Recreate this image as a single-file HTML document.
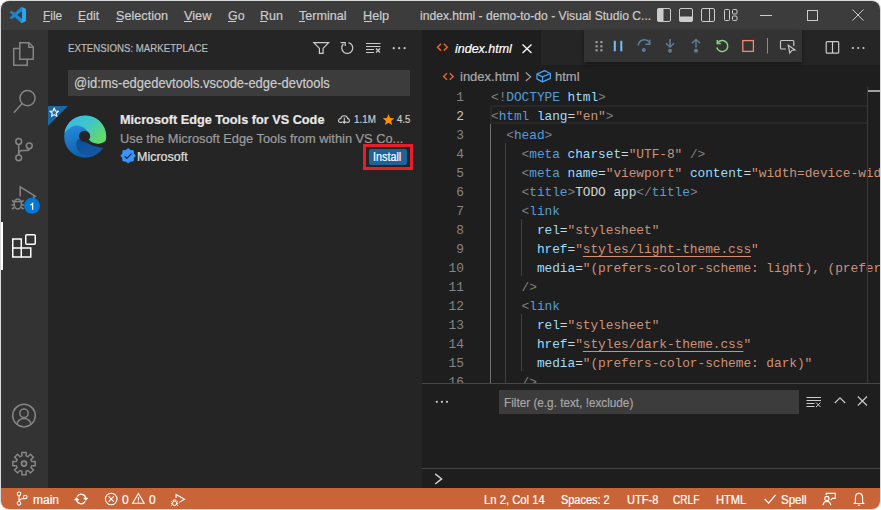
<!DOCTYPE html>
<html><head><meta charset="utf-8">
<style>
*{margin:0;padding:0;box-sizing:border-box}
html,body{width:881px;height:510px;overflow:hidden;background:#ffffff}
body{position:relative;font-family:"Liberation Sans",sans-serif;color:#ccc}
.abs{position:absolute}
#win{position:absolute;left:1px;top:1px;width:879px;height:508px;border-radius:8px;overflow:hidden;background:transparent;box-shadow:0 0 0 1px rgba(0,0,0,0.15)}
#in{position:absolute;left:-1px;top:-1px;width:881px;height:510px}
.t{position:absolute;white-space:pre;line-height:1;-webkit-text-stroke:0.2px currentColor}
svg{position:absolute;overflow:visible}
#title{left:0;top:0;width:881px;height:30px;background:#3c3c3c}
.menu{top:9px;font-size:13px;color:#cccccc}
.menu u{text-decoration:none;border-bottom:1px solid #ccc}
#act{left:0;top:30px;width:48px;height:458px;background:#333333}
#side{left:48px;top:30px;width:374px;height:458px;background:#252526}
#tabs{left:422px;top:30px;width:458px;height:35px;background:#252526}
#tab{left:422px;top:30px;width:119px;height:35px;background:#1e1e1e}
#status{left:0;top:488px;width:881px;height:22px;background:#c86437}
.st{top:494px;font-size:12px;color:#ffffff}
.code{font-family:"Liberation Mono",monospace;font-size:12.83px;line-height:19px;letter-spacing:-0.05px;white-space:pre;color:#d4d4d4}
.ln{position:absolute;left:422px;width:42px;text-align:right;font-family:"Liberation Mono",monospace;font-size:12.83px;line-height:19px;color:#858585}
.p{color:#808080}.g{color:#569cd6}.a{color:#9cdcfe}.s{color:#ce9178}.w{color:#d4d4d4}
.ul{text-decoration:underline;text-underline-offset:3px}
</style></head><body>
<div id="win"><div id="in">
  <!-- title bar -->
  <div class="abs" id="title"></div>
  <div class="t menu" style="transform:scaleX(0.914);transform-origin:0 0;left:43px">File</div>
  <div class="t menu" style="transform:scaleX(0.939);transform-origin:0 0;left:78px">Edit</div>
  <div class="t menu" style="transform:scaleX(0.974);transform-origin:0 0;left:116px">Selection</div>
  <div class="t menu" style="transform:scaleX(0.982);transform-origin:0 0;left:184px">View</div>
  <div class="t menu" style="transform:scaleX(0.953);transform-origin:0 0;left:228px">Go</div>
  <div class="t menu" style="transform:scaleX(0.957);transform-origin:0 0;left:260px">Run</div>
  <div class="t menu" style="transform:scaleX(0.969);transform-origin:0 0;left:299px">Terminal</div>
  <div class="t menu" style="transform:scaleX(0.974);transform-origin:0 0;left:363px">Help</div>
  <div class="t menu" style="transform:scaleX(0.931);transform-origin:0 0;left:420px">index.html - demo-to-do - Visual Studio C...</div>

  <!-- activity bar -->
  <div class="abs" id="act"></div>

  <!-- ICONS title/activity -->
  <svg class="abs" style="left:0;top:0" width="881" height="510" viewBox="0 0 881 510">
    <!-- vscode logo -->
    <g transform="translate(10,7) scale(0.16)">
      <path fill="#1a88d0" d="M96.46 10.8L75.86.87a6.23 6.23 0 0 0-7.1 1.2L29.33 38.04 12.15 25a4.16 4.16 0 0 0-5.32.24L1.32 30.25a4.17 4.17 0 0 0 0 6.16L16.2 50 1.33 63.59a4.17 4.17 0 0 0 0 6.16l5.5 5.01a4.16 4.16 0 0 0 5.32.24l17.18-13.04 39.43 35.97a6.23 6.23 0 0 0 7.1 1.2l20.6-9.91A6.25 6.25 0 0 0 100 83.6V16.4a6.25 6.25 0 0 0-3.54-5.6zM75.02 72.7L45.11 50l29.9-22.7z"/>
      <path fill="#2aa6ee" d="M75.86.87a6.23 6.23 0 0 0-7.1 1.2L75 0 75.02 27.3 75.02 72.7 68.76 97.92a6.23 6.23 0 0 0 7.1 1.2l20.6-9.91A6.25 6.25 0 0 0 100 83.6V16.4a6.25 6.25 0 0 0-3.54-5.6z"/>
    </g>
    <!-- layout icons -->
    <g fill="none" stroke="#cccccc" stroke-width="1">
      <rect x="657.5" y="8.5" width="13" height="13" rx="1.5"/>
      <rect x="679.5" y="8.5" width="13" height="13" rx="1.5"/>
      <rect x="701.5" y="8.5" width="13" height="13" rx="1.5"/>
      <line x1="709.5" y1="9" x2="709.5" y2="21"/>
      <rect x="724.5" y="9.5" width="5" height="11" rx="1"/>
      <rect x="732.5" y="9.5" width="4.5" height="4.5" rx="1"/>
      <rect x="732.5" y="16" width="4.5" height="4.5" rx="1"/>
      <line x1="760" y1="15.5" x2="772" y2="15.5"/>
      <rect x="807.5" y="10.5" width="10" height="10"/>
      <path d="M852.5 9.5 L863.5 20.5 M863.5 9.5 L852.5 20.5"/>
    </g>
    <rect x="657.5" y="8.5" width="6" height="13" fill="#cccccc"/>
    <rect x="679.5" y="16.5" width="13" height="5" fill="#cccccc"/>
    <!-- menu mnemonic underlines -->
    <g fill="#cccccc">
      <rect x="43" y="21" width="7" height="1"/>
      <rect x="78" y="21" width="7" height="1"/>
      <rect x="116" y="21" width="7" height="1"/>
      <rect x="184" y="21" width="8" height="1"/>
      <rect x="228" y="21" width="8" height="1"/>
      <rect x="260" y="21" width="7" height="1"/>
      <rect x="299" y="21" width="6" height="1"/>
      <rect x="364" y="21" width="8" height="1"/>
    </g>
    <!-- activity bar -->
    <g fill="none" stroke="#858585" stroke-width="1.5">
      <!-- files -->
      <path d="M19.5 48.5 H13.75 V65.25 H27.25 V59.5"/>
      <path d="M19.75 42.75 H29 L33.25 47 V59.25 H19.75 Z"/>
      <path d="M28.75 43 V47.25 H33"/>
      <!-- search -->
      <circle cx="27.5" cy="98.1" r="7.6"/>
      <path d="M22.2 103.6 L13.8 112.8"/>
      <!-- scm -->
      <circle cx="18.7" cy="141.5" r="2.9"/>
      <circle cx="29.3" cy="145.8" r="2.9"/>
      <circle cx="18.7" cy="157.8" r="2.9"/>
      <path d="M18.7 144.4 V154.9"/>
      <path d="M18.8 154.8 C18.8 151.8 20.2 150.6 22.5 150.6 H26 C28.3 150.6 29.3 149.8 29.3 148.7"/>
      <!-- debug -->
      <path d="M20.2 196.5 V186.8 L35.2 196.2 L33 197.5"/>
      <ellipse cx="17.8" cy="204" rx="3.6" ry="5"/>
      <path d="M14.3 201.5 H21.3 M12 200.5 L14.3 202 M23.6 200.5 L21.3 202 M11.5 205 H14 M21.6 205 H24 M12 209 L14.3 207.5 M23.6 209 L21.3 207.5"/>
      <!-- accounts -->
      <circle cx="24" cy="415.6" r="11.3"/>
      <circle cx="24" cy="413.2" r="4.2"/>
      <path d="M16.8 424.4 C18 420.3 21 418.6 24 418.6 C27 418.6 30 420.3 31.2 424.4"/>
      <!-- gear -->
      <path d="M21.93 455.87 L21.92 452.39 L26.08 452.39 L26.07 455.87 L28.00 456.67 L30.46 454.20 L33.40 457.14 L30.93 459.60 L31.73 461.53 L35.21 461.52 L35.21 465.68 L31.73 465.67 L30.93 467.60 L33.40 470.06 L30.46 473.00 L28.00 470.53 L26.07 471.33 L26.08 474.81 L21.92 474.81 L21.93 471.33 L20.00 470.53 L17.54 473.00 L14.60 470.06 L17.07 467.60 L16.27 465.67 L12.79 465.68 L12.79 461.52 L16.27 461.53 L17.07 459.60 L14.60 457.14 L17.54 454.20 L20.00 456.67 Z" stroke-linejoin="miter"/>
      <circle cx="24" cy="463.6" r="2.5" stroke-width="1.8"/>
    </g>
    <!-- extensions active -->
    <g fill="none" stroke="#ffffff" stroke-width="1.5">
      <path d="M12.75 257 V239 H21.25 V257 Z"/>
      <path d="M12.75 248 H30.75 V257 H21.25"/>
      <rect x="25.75" y="234.75" width="9.5" height="9.5" rx="1"/>
    </g>
    <rect x="1" y="222" width="2" height="48" fill="#ffffff"/>
    <circle cx="32" cy="205.8" r="8" fill="#0078d4"/>
    <path d="M30.4 205.3 L32.6 203.5 V209.8" stroke="#ffffff" stroke-width="1.3" fill="none"/>
  </svg>
  

  <!-- side bar -->
  <div class="abs" id="side"></div>
  <div class="t" style="transform:scaleX(0.88);transform-origin:0 0;left:68px;top:43px;font-size:11px;color:#bbbbbb">EXTENSIONS: MARKETPLACE</div>
  <div class="abs" style="left:68px;top:70px;width:342px;height:26px;background:#3c3c3c"></div>
  <div class="t" style="transform:scaleX(0.925);transform-origin:0 0;left:74px;top:76px;font-size:14px;color:#cccccc">@id:ms-edgedevtools.vscode-edge-devtools</div>

  <div class="t" style="transform:scaleX(0.941);transform-origin:0 0;left:120px;top:113px;font-size:13.5px;font-weight:bold;color:#e7e7e7">Microsoft Edge Tools for VS Code</div>
  <div class="t" style="transform:scaleX(0.892);transform-origin:0 0;left:354px;top:114px;font-size:11px;color:#cccccc">1.1M</div>
  <div class="t" style="transform:scaleX(0.867);transform-origin:0 0;left:397px;top:114px;font-size:11px;color:#cccccc">4.5</div>
  <div class="t" style="transform:scaleX(0.986);transform-origin:0 0;left:120px;top:132px;font-size:13px;color:#9d9d9d">Use the Microsoft Edge Tools from within VS Co...</div>
  <div class="t" style="left:137px;top:151px;font-size:12.5px;color:#e0e0e0">Microsoft</div>
  <div class="abs" style="left:363px;top:144px;width:50px;height:26px;border:3px solid #e5202a"></div>
  <div class="abs" style="left:369px;top:149px;width:38px;height:16px;background:#1d649e;border-radius:2px"></div>
  <div class="t" style="transform:scaleX(0.9);transform-origin:0 0;left:373px;top:151px;font-size:12px;color:#ffffff">Install</div>


  <svg class="abs" style="left:0;top:0" width="881" height="510" viewBox="0 0 881 510">
    <defs>
      <linearGradient id="egTop" x1="0" y1="0" x2="1" y2="0.6">
        <stop offset="0" stop-color="#34b7ea"/>
        <stop offset="0.55" stop-color="#3fc6c9"/>
        <stop offset="1" stop-color="#62d968"/>
      </linearGradient>
      <linearGradient id="egBlue" x1="0" y1="0" x2="0.3" y2="1">
        <stop offset="0" stop-color="#2e9ae4"/>
        <stop offset="1" stop-color="#0f5fae"/>
      </linearGradient>
      <linearGradient id="egWave" x1="0" y1="0" x2="1" y2="1">
        <stop offset="0" stop-color="#0d4f98"/>
        <stop offset="1" stop-color="#135aa6"/>
      </linearGradient>
    </defs>
    <!-- sidebar actions -->
    <g fill="none" stroke="#cccccc" stroke-width="1.2">
      <path d="M313.8 42.6 H328.6 L323.1 48.4 V53.4 H319.4 V48.4 Z"/>
      <path d="M348.6 42.6 A5.5 5.5 0 1 1 343.4 44"/>
      <path d="M340.6 42.7 H345.2 V46"/>
      <path d="M366 43.5 H380.5 M366 46.5 H380.5 M366 49.5 H374 M366 52.5 H374" stroke-width="1"/>
      <path d="M376 48.5 L380 52.5 M380 48.5 L376 52.5"/>
    </g>
    <g fill="#cccccc">
      <circle cx="393.8" cy="48.2" r="1.1"/><circle cx="399.2" cy="48.2" r="1.1"/><circle cx="404.6" cy="48.2" r="1.1"/>
    </g>
    <!-- star badge -->
    <path d="M48 106 H68 L48 126 Z" fill="#1b68a6"/>
    <path d="M54.20 108.00 L55.38 110.98 L58.57 111.18 L56.10 113.22 L56.90 116.32 L54.20 114.60 L51.50 116.32 L52.30 113.22 L49.83 111.18 L53.02 110.98 Z" fill="none" stroke="#ffffff" stroke-width="1.1" stroke-linejoin="round"/>
    <!-- edge logo -->
    <circle cx="85.2" cy="136.7" r="21" fill="url(#egBlue)"/>
    <path d="M64.3 133 A21 21 0 0 1 105.9 140 C103 144.2 96.5 144.6 93 142.8 C91 141.8 90 141 89.8 140.7 L84.5 136.5 L87.6 131.2 C84.5 127 77.5 124.6 73.9 125.9 C69.5 127.4 66.5 130 64.3 133 Z" fill="url(#egTop)"/>
    <path d="M79.2 138.6 C76 141 75 145.5 77.5 149.5 C80.5 154.5 86.5 156.5 92 155.7 C97 155 100.6 151 102.8 147 C96 147 90 145 85 142 Z" fill="url(#egWave)"/>
    <path d="M88.5 139.5 C91 142.5 95 144 98.2 143.9 C101 143.8 103.5 142.8 106.5 141 L106.5 147.8 L102.5 147.8 C96 147.2 90 145 85 142 Z" fill="#252526"/>
    <circle cx="84.6" cy="136.3" r="5.6" fill="#252526"/>
    <!-- download icon -->
    <g fill="none" stroke="#cccccc" stroke-width="1.1">
      <path transform="translate(0,0.8)" d="M342.2 121.6 H340 C337.9 121.6 337.9 117.7 340.8 117.8 C341 115.8 342.6 114.9 344.3 114.9 C346 114.9 347.4 116 347.6 117.8 C350 117.7 350 121.6 348 121.6 H346.4"/>
      <path d="M344.3 117.6 V123.2 M342.6 121.5 L344.3 123.2 L346 121.5"/>
    </g>
    <path d="M388.5 114 L390.1 117.9 L394.3 118.2 L391.1 120.9 L392.1 125 L388.5 122.8 L384.9 125 L385.9 120.9 L382.7 118.2 L386.9 117.9 Z" fill="#ff8e00"/>
    <!-- verified badge -->
    <path d="M128.10 148.50 L130.36 150.35 L133.26 150.64 L133.55 153.54 L135.40 155.80 L133.55 158.06 L133.26 160.96 L130.36 161.25 L128.10 163.10 L125.84 161.25 L122.94 160.96 L122.65 158.06 L120.80 155.80 L122.65 153.54 L122.94 150.64 L125.84 150.35 Z" fill="#3794ff" stroke="#3794ff" stroke-width="0.8" stroke-linejoin="round"/>
    <path d="M124.6 156.2 L126.8 158.3 L131.4 153.6" stroke="#1a2a4a" stroke-width="1.2" fill="none"/>
  </svg>

  <!-- editor -->
  <div class="abs" style="left:422px;top:30px;width:459px;height:458px;background:#1e1e1e"></div>
  <div class="abs" id="tabs"></div>
  <div class="abs" id="tab"></div>
  <div class="t" style="transform:scaleX(0.96);transform-origin:0 0;left:454.5px;top:42px;font-size:13px;font-style:italic;color:#ffffff">index.html</div>
  <div class="t" style="left:460px;top:70px;font-size:13px;color:#a9a9a9">index.html</div>
  <div class="t" style="left:555px;top:70px;font-size:13px;color:#a9a9a9">html</div>

  <!-- current line -->
  <div class="abs" style="left:490px;top:105px;width:378px;height:19px;border:2px solid #282828;border-right:none"></div>

  <div class="ln" style="top:88px">1</div>
  <div class="ln" style="top:107px;color:#c6c6c6">2</div>
  <div class="ln" style="top:126px">3</div>
  <div class="ln" style="top:145px">4</div>
  <div class="ln" style="top:164px">5</div>
  <div class="ln" style="top:183px">6</div>
  <div class="ln" style="top:202px">7</div>
  <div class="ln" style="top:221px">8</div>
  <div class="ln" style="top:240px">9</div>
  <div class="ln" style="top:259px">10</div>
  <div class="ln" style="top:278px">11</div>
  <div class="ln" style="top:297px">12</div>
  <div class="ln" style="top:316px">13</div>
  <div class="ln" style="top:335px">14</div>
  <div class="ln" style="top:354px">15</div>
  <div class="ln" style="top:373px">16</div>

  <div class="abs code" style="left:491px;top:88px;width:389px;height:295px;overflow:hidden"><span class="p">&lt;!</span><span class="g">DOCTYPE</span> <span class="a">html</span><span class="p">&gt;</span>
<span class="p">&lt;</span><span class="g">html</span> <span class="a">lang</span>=<span class="s">"en"</span><span class="p">&gt;</span>
  <span class="p">&lt;</span><span class="g">head</span><span class="p">&gt;</span>
    <span class="p">&lt;</span><span class="g">meta</span> <span class="a">charset</span>=<span class="s">"UTF-8"</span> <span class="p">/&gt;</span>
    <span class="p">&lt;</span><span class="g">meta</span> <span class="a">name</span>=<span class="s">"viewport"</span> <span class="a">content</span>=<span class="s">"width=device-width, initial-scale=1.0"</span> <span class="p">/&gt;</span>
    <span class="p">&lt;</span><span class="g">title</span><span class="p">&gt;</span>TODO app<span class="p">&lt;/</span><span class="g">title</span><span class="p">&gt;</span>
    <span class="p">&lt;</span><span class="g">link</span>
      <span class="a">rel</span>=<span class="s">"stylesheet"</span>
      <span class="a">href</span>=<span class="s">"<span class="ul">styles/light-theme.css</span>"</span>
      <span class="a">media</span>=<span class="s">"(prefers-color-scheme: light), (prefers-color-scheme: no-preference)"</span>
    <span class="p">/&gt;</span>
    <span class="p">&lt;</span><span class="g">link</span>
      <span class="a">rel</span>=<span class="s">"stylesheet"</span>
      <span class="a">href</span>=<span class="s">"<span class="ul">styles/dark-theme.css</span>"</span>
      <span class="a">media</span>=<span class="s">"(prefers-color-scheme: dark)"</span>
    <span class="p">/&gt;</span></div>

  <!-- overview ruler -->
  <div class="abs" style="left:867px;top:87px;width:1px;height:296px;background:#3a3a3a"></div>
  <div class="abs" style="left:868px;top:90px;width:12px;height:2px;background:#a0a0a0"></div>


  <svg class="abs" style="left:0;top:0" width="881" height="510" viewBox="0 0 881 510">
    <!-- tab -->
    <g fill="none" stroke="#e4622c" stroke-width="1.5">
      <path d="M441 43.8 L437.5 47.2 L441 50.6 M443.8 43.8 L447.3 47.2 L443.8 50.6"/>
      <path d="M447 73.2 L443.6 76.5 L447 79.8 M449.8 73.2 L453.2 76.5 L449.8 79.8"/>
    </g>
    <path d="M522.5 44.5 L531.5 53 M531.5 44.5 L522.5 53" stroke="#ffffff" stroke-width="1.3" fill="none"/>
    <path d="M525.8 72.5 L530.6 76.8 L525.8 81" stroke="#a9a9a9" stroke-width="1.1" fill="none"/>
    <g fill="none" stroke="#4aa2f6" stroke-width="1.2">
      <path d="M544.6 70.6 L550.4 73.5 V78.4 L542.5 81.9 L536.9 78.9 V74.1 Z" stroke-linejoin="round"/>
      <path d="M536.9 74.1 L542.5 76.9 L550.4 73.5 M542.5 76.9 V81.9"/>
    </g>
    <!-- indent guides -->
    <rect x="490" y="124" width="1" height="259" fill="#707070"/>
    <rect x="505" y="143" width="1" height="240" fill="#404040"/>
    <rect x="521" y="219" width="1" height="57" fill="#404040"/>
    <rect x="521" y="314" width="1" height="57" fill="#404040"/>
    <!-- split / more -->
    <g fill="none" stroke="#cccccc" stroke-width="1.2">
      <rect x="826.2" y="41.6" width="12.5" height="11.6" rx="1"/>
      <path d="M832.5 41.8 V53"/>
    </g>
    <g fill="#cccccc"><circle cx="852.9" cy="48" r="1.1"/><circle cx="858.2" cy="48" r="1.1"/><circle cx="863.5" cy="48" r="1.1"/></g>
  </svg>

  <!-- debug toolbar -->
  <div class="abs" style="left:584px;top:30px;width:218px;height:32px;background:#333333;box-shadow:0 2px 4px rgba(0,0,0,0.45)"></div>


  <svg class="abs" style="left:0;top:0" width="881" height="510" viewBox="0 0 881 510">
    <g fill="#9a9a9a">
      <rect x="595.5" y="41" width="2.2" height="2.2"/><rect x="600.3" y="41" width="2.2" height="2.2"/>
      <rect x="595.5" y="45.2" width="2.2" height="2.2"/><rect x="600.3" y="45.2" width="2.2" height="2.2"/>
      <rect x="595.5" y="49.2" width="2.2" height="2.2"/><rect x="600.3" y="49.2" width="2.2" height="2.2"/>
    </g>
    <g fill="#75beff"><rect x="613.8" y="40.8" width="2" height="10.5"/><rect x="620.3" y="40.8" width="2" height="10.5"/></g>
    <g fill="none" stroke="#5b7e9c" stroke-width="1.5">
      <path d="M638.2 45.5 A6.2 6.2 0 0 1 649.5 42.5"/>
      <path d="M649.8 39.8 V44.2 H645.4"/>
      <path d="M670 39 V46.8 M666 43.2 L670 47 L674 43.2"/>
      <path d="M696 47.5 V39.6 M692 43.3 L696 39.5 L700 43.3"/>
    </g>
    <g fill="#5b7e9c"><circle cx="643.8" cy="50" r="2"/><circle cx="670" cy="50.8" r="2"/><circle cx="696" cy="50.8" r="2"/></g>
    <g fill="none" stroke="#89d185" stroke-width="1.5">
      <path d="M717.8 42.5 A5.6 5.6 0 1 1 716.8 47.5"/>
      <path d="M717.3 40 V43.5 H720.8"/>
    </g>
    <rect x="742.8" y="40.6" width="10.6" height="10.8" fill="none" stroke="#f48771" stroke-width="1.3"/>
    <rect x="767" y="38" width="1" height="15.5" fill="#8a8a8a"/>
    <g fill="none" stroke="#c5c5c5" stroke-width="1.2">
      <path d="M786 49 H781.5 A1 1 0 0 1 780.5 48 V41.5 A1 1 0 0 1 781.5 40.5 H792.8 A1 1 0 0 1 793.8 41.5 V46"/>
      <path d="M788.3 45.3 L795 50 L791.8 50.5 L789.8 53 Z"/>
    </g>
  </svg>

  <!-- panel -->
  <div class="abs" style="left:422px;top:383px;width:458px;height:105px;background:#1e1e1e;border-top:1px solid #474747"></div>
  <div class="abs" style="left:499px;top:390px;width:300px;height:24px;background:#3c3c3c"></div>
  <div class="t" style="transform:scaleX(0.904);transform-origin:0 0;left:504px;top:396px;font-size:13px;color:#a6a6a6">Filter (e.g. text, !exclude)</div>
  <div class="abs" style="left:422px;top:468px;width:458px;height:1px;background:#474747"></div>


  <svg class="abs" style="left:0;top:0" width="881" height="510" viewBox="0 0 881 510">
    <g fill="#cccccc"><circle cx="436.8" cy="401.8" r="1.1"/><circle cx="441.9" cy="401.8" r="1.1"/><circle cx="447" cy="401.8" r="1.1"/></g>
    <g fill="none" stroke="#cccccc" stroke-width="1.2">
      <path d="M806.5 397.5 H821 M806.5 400.5 H821 M806.5 403.5 H814.5 M806.5 406.5 H814.5" stroke-width="1"/>
      <path d="M816 402.5 L820.5 407 M820.5 402.5 L816 407" stroke-width="1"/>
      <path d="M834.8 403 L840 397.8 L845.2 403" stroke-width="1.1"/>
      <path d="M857.8 396.5 L867 405.5 M867 396.5 L857.8 405.5" stroke-width="1.1"/>
      <path d="M435.2 473.8 L441.6 478.9 L435.2 484" stroke-width="1.5"/>
    </g>
  </svg>

  <!-- status bar -->
  <div class="abs" id="status"></div>

  <svg class="abs" style="left:0;top:0" width="881" height="510" viewBox="0 0 881 510">
    <g fill="none" stroke="#ffffff" stroke-width="1.1">
      <circle cx="19" cy="493.8" r="1.8"/><circle cx="25.3" cy="497" r="1.8"/><circle cx="19" cy="503.3" r="1.8"/>
      <path d="M19 495.6 V501.5 M19.2 501.2 C19.5 499 21 498.8 23 498.8 C24.4 498.8 25.3 498.6 25.3 498.8"/>
      <path d="M77.2 496.6 A4.6 4.6 0 0 1 85.8 498.4 M85.2 501.4 A4.6 4.6 0 0 1 76.6 499.6" stroke-width="1.3"/>
      <path d="M83.6 498 H88 L85.8 500.5 Z M74.4 500 H78.8 L76.6 497.5 Z" fill="#ffffff" stroke-width="0.6"/>
      <circle cx="111.2" cy="499" r="5.8"/>
      <path d="M108.6 496.4 L113.8 501.6 M113.8 496.4 L108.6 501.6"/>
      <path d="M138.4 493.5 L144.2 503.3 H132.6 Z"/>
      <path d="M138.4 497 V500.5 M138.4 501.5 V502.6"/>
      <path d="M176.1 498 V494.4 L184.5 499.3 L179.2 502.4"/>
      <path d="M173 501 A1.6 1.2 0 0 1 176.2 501" stroke-width="1"/><ellipse cx="174.6" cy="503.3" rx="2" ry="2.3" stroke-width="1"/><path d="M171.2 501.6 L172.5 502.3 M171 503.6 H172.5 M171.2 505.5 L172.6 504.7 M178 501.6 L176.7 502.3 M178.2 503.6 H176.7 M178 505.5 L176.6 504.7" stroke-width="0.9"/>
      <path d="M764.7 499 L768.7 503.2 L775.6 494.8" stroke-width="1.2"/>
      <circle cx="826.9" cy="498.5" r="2.1"/>
      <path d="M822.9 505.2 C823.5 502.6 825 501.4 826.9 501.4 C828.8 501.4 830.3 502.6 830.9 505.2"/>
      <path d="M826.2 494.9 V493.4 H835.3 V498.4 H832.4 L830.6 500.2"/>
      <path d="M855.4 502.5 V498.2 C855.4 495.1 856.9 493.4 859 493.4 C861.1 493.4 862.6 495.1 862.6 498.2 V502.5 L864 503.5 H854 Z" stroke-linejoin="round"/>
      <path d="M857.9 504.8 Q859 506 860.1 504.8"/>
    </g>
  </svg>

  <div class="t st" style="left:33px">main</div>
  <div class="t st" style="left:122px">0</div>
  <div class="t st" style="left:149px">0</div>
  <div class="t st" style="transform:scaleX(0.938);transform-origin:0 0;left:484px">Ln 2, Col 14</div>
  <div class="t st" style="transform:scaleX(0.911);transform-origin:0 0;left:561px">Spaces: 2</div>
  <div class="t st" style="transform:scaleX(0.924);transform-origin:0 0;left:627px">UTF-8</div>
  <div class="t st" style="transform:scaleX(0.839);transform-origin:0 0;left:673px">CRLF</div>
  <div class="t st" style="transform:scaleX(0.927);transform-origin:0 0;left:716px">HTML</div>
  <div class="t st" style="transform:scaleX(0.958);transform-origin:0 0;left:781px">Spell</div>
</div></div>
</body></html>
